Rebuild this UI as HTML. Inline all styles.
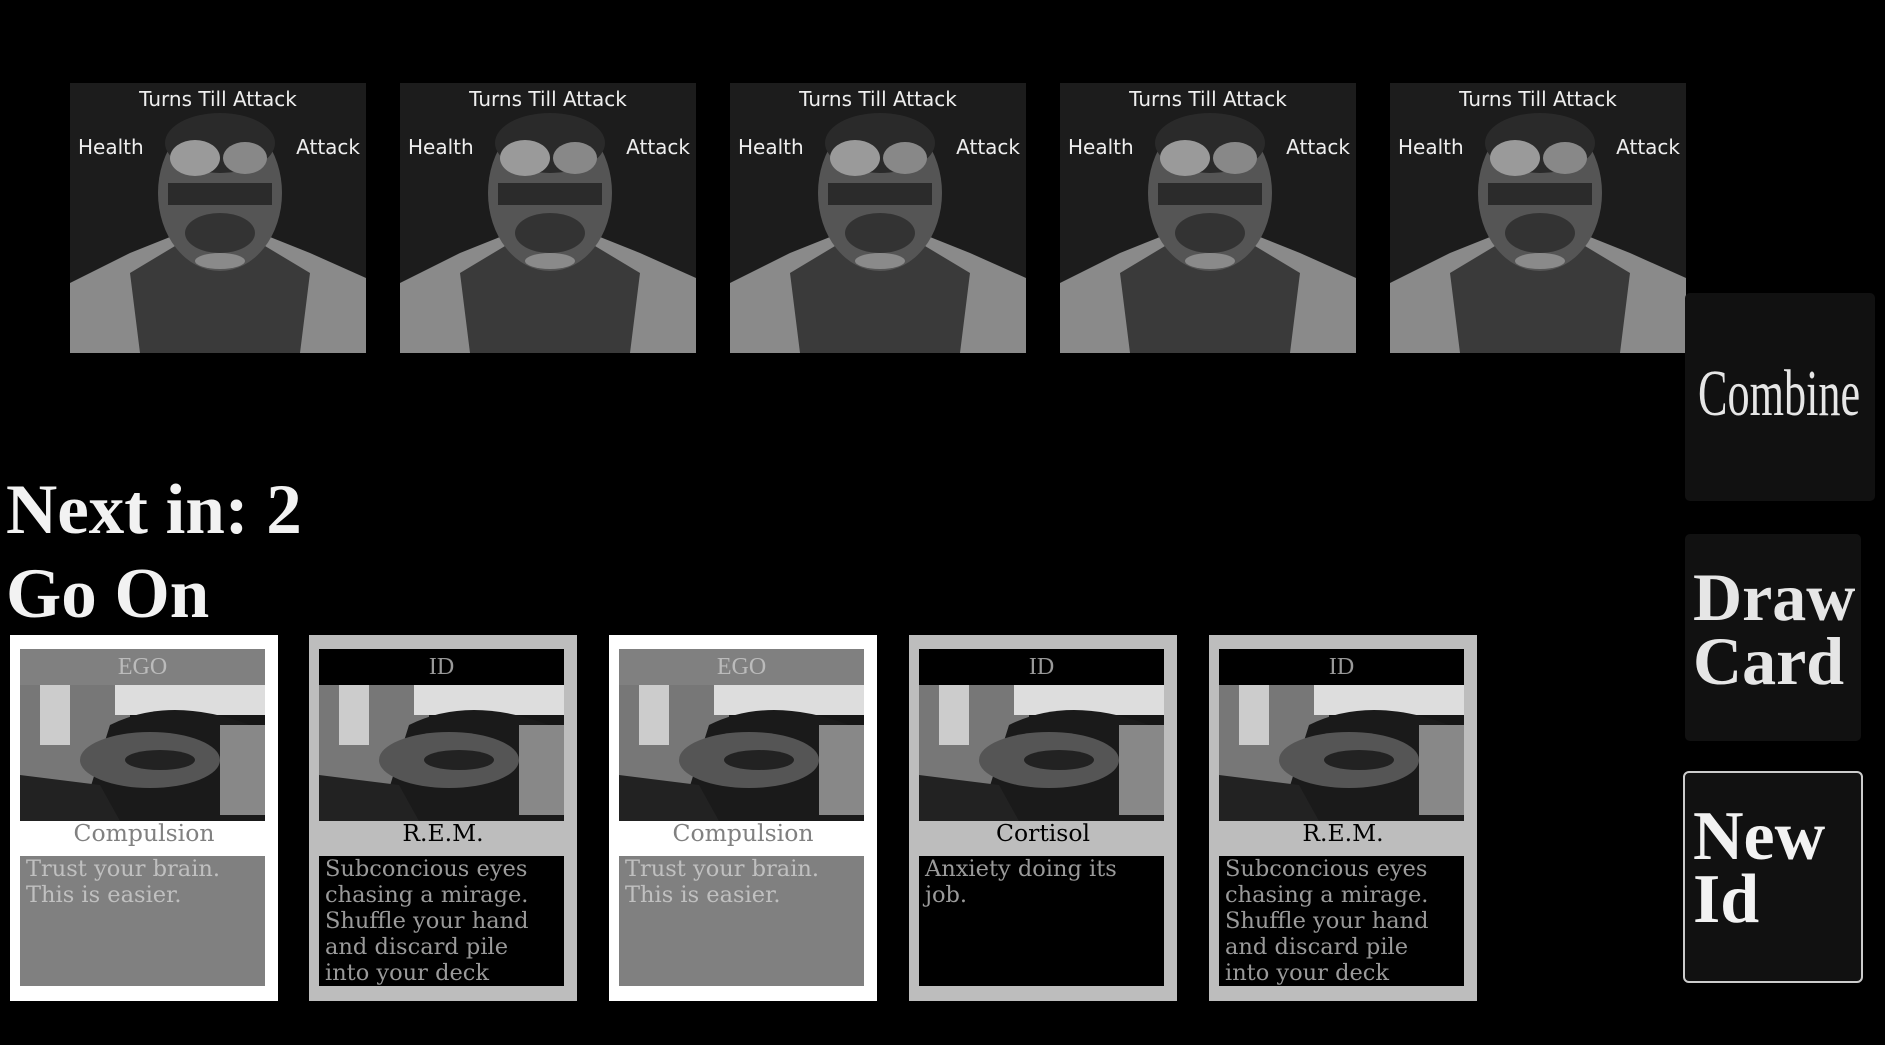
<!DOCTYPE html>
<html><head><meta charset="utf-8"><style>
body{margin:0;width:1885px;height:1045px;background:#000;position:relative;overflow:hidden;font-family:"Liberation Serif",serif}
.en{position:absolute;top:83px;width:296px;height:270px;background:#1c1c1c;overflow:hidden;font-family:"DejaVu Sans","Liberation Sans",sans-serif;color:#eee}
.en svg{position:absolute;left:0;top:0}
.en .t{position:absolute;width:100%;text-align:center;font-size:20px;top:4px}
.en .h{position:absolute;left:8px;top:52px;font-size:20px}
.en .a{position:absolute;right:6px;top:52px;font-size:20px}
.big{position:absolute;left:6px;color:#f2f2f2;font-weight:bold;font-size:71px;line-height:1}
.c{position:absolute;top:635px;width:268px;height:366px}
.c .hd{position:absolute;left:10px;top:14px;width:245px;height:36px;text-align:center;font-size:24px;line-height:36px}
.c svg{position:absolute;left:10px;top:50px}
.c .nm{position:absolute;left:0;top:184px;width:268px;text-align:center;font-size:23.5px;font-family:"DejaVu Serif",serif}
.c .ds{position:absolute;left:10px;top:221px;width:231px;height:130px;padding-left:6px;padding-right:8px;font-size:22.5px;line-height:26px;font-family:"DejaVu Serif",serif}
.b{position:absolute;background:#111;border-radius:5px;color:#e6e6e6;box-sizing:border-box}
</style></head><body>
<svg width="0" height="0" style="position:absolute"><defs>
<g id="face">
<rect width="296" height="270" fill="#1c1c1c"/>
<path d="M0 200 L60 170 L110 150 L190 150 L240 170 L296 195 L296 270 L0 270Z" fill="#8a8a8a"/>
<path d="M60 190 L110 160 L190 160 L240 190 L230 270 L70 270Z" fill="#3a3a3a"/>
<ellipse cx="150" cy="110" rx="62" ry="78" fill="#555"/>
<ellipse cx="150" cy="60" rx="55" ry="30" fill="#2a2a2a"/>
<ellipse cx="125" cy="75" rx="25" ry="18" fill="#9a9a9a"/>
<ellipse cx="175" cy="75" rx="22" ry="16" fill="#888"/>
<rect x="98" y="100" width="104" height="22" fill="#2b2b2b"/>
<ellipse cx="150" cy="150" rx="35" ry="20" fill="#333"/>
<ellipse cx="150" cy="178" rx="25" ry="8" fill="#8a8a8a"/>
</g>
<g id="eye">
<rect width="245" height="136" fill="#161616"/>
<rect x="0" y="0" width="110" height="136" fill="#777"/>
<rect x="20" y="0" width="30" height="60" fill="#ccc"/>
<rect x="95" y="0" width="150" height="30" fill="#ddd"/>
<path d="M90 40 Q150 10 230 40 L245 136 L60 136Z" fill="#1a1a1a"/>
<ellipse cx="130" cy="75" rx="70" ry="28" fill="#555"/>
<ellipse cx="140" cy="75" rx="35" ry="10" fill="#222"/>
<path d="M0 90 L80 100 L100 136 L0 136Z" fill="#222"/>
<rect x="200" y="40" width="45" height="90" fill="#888"/>
</g></defs></svg>

<div class="en" style="left:70px"><svg width="296" height="270"><use href="#face"/></svg><div class="t">Turns Till Attack</div><div class="h">Health</div><div class="a">Attack</div></div>
<div class="en" style="left:400px"><svg width="296" height="270"><use href="#face"/></svg><div class="t">Turns Till Attack</div><div class="h">Health</div><div class="a">Attack</div></div>
<div class="en" style="left:730px"><svg width="296" height="270"><use href="#face"/></svg><div class="t">Turns Till Attack</div><div class="h">Health</div><div class="a">Attack</div></div>
<div class="en" style="left:1060px"><svg width="296" height="270"><use href="#face"/></svg><div class="t">Turns Till Attack</div><div class="h">Health</div><div class="a">Attack</div></div>
<div class="en" style="left:1390px"><svg width="296" height="270"><use href="#face"/></svg><div class="t">Turns Till Attack</div><div class="h">Health</div><div class="a">Attack</div></div>

<div class="big" style="top:475px">Next in: 2</div>
<div class="big" style="top:559px">Go On</div>

<div class="c" style="left:10px;background:#fff"><div class="hd" style="background:#808080;color:#bbb">EGO</div><svg width="245" height="136"><use href="#eye"/></svg><div class="nm" style="color:#808080">Compulsion</div><div class="ds" style="background:#808080;color:#c0c0c0">Trust your brain. This is easier.</div></div>
<div class="c" style="left:309px;background:#bdbdbd"><div class="hd" style="background:#000;color:#999">ID</div><svg width="245" height="136"><use href="#eye"/></svg><div class="nm" style="color:#000">R.E.M.</div><div class="ds" style="background:#000;color:#9a9a9a">Subconcious eyes chasing a mirage. Shuffle your hand and discard pile into your deck</div></div>
<div class="c" style="left:609px;background:#fff"><div class="hd" style="background:#808080;color:#bbb">EGO</div><svg width="245" height="136"><use href="#eye"/></svg><div class="nm" style="color:#808080">Compulsion</div><div class="ds" style="background:#808080;color:#c0c0c0">Trust your brain. This is easier.</div></div>
<div class="c" style="left:909px;background:#bdbdbd"><div class="hd" style="background:#000;color:#999">ID</div><svg width="245" height="136"><use href="#eye"/></svg><div class="nm" style="color:#000">Cortisol</div><div class="ds" style="background:#000;color:#9a9a9a">Anxiety doing its job.</div></div>
<div class="c" style="left:1209px;background:#bdbdbd"><div class="hd" style="background:#000;color:#999">ID</div><svg width="245" height="136"><use href="#eye"/></svg><div class="nm" style="color:#000">R.E.M.</div><div class="ds" style="background:#000;color:#9a9a9a">Subconcious eyes chasing a mirage. Shuffle your hand and discard pile into your deck</div></div>

<div class="b" style="left:1685px;top:293px;width:190px;height:208px"><div style="position:absolute;left:13px;top:68px;font-size:66px;line-height:1;transform:scaleX(0.67);transform-origin:0 0;white-space:nowrap">Combine</div></div>
<div class="b" style="left:1685px;top:534px;width:176px;height:207px"><div style="position:absolute;left:8px;top:31px;font-size:68px;line-height:64px;font-weight:bold">Draw<br>Card</div></div>
<div class="b" style="left:1683px;top:771px;width:180px;height:212px;border:2px solid #ccc;border-radius:6px;color:#f2f2f2"><div style="position:absolute;left:8px;top:32px;font-size:70px;line-height:63px;font-weight:bold">New<br>Id</div></div>
</body></html>
